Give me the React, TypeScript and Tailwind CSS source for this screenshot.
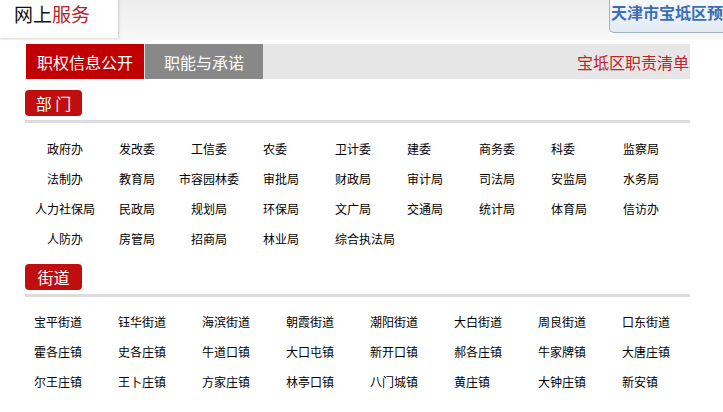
import React from "react";

const FONT = { fontFamily: '"Microsoft YaHei", "Noto Sans CJK SC", "Noto Sans", sans-serif' };

// Trailing full-width space keeps the two-character names aligned like the original list.
const DEPARTMENTS = [
  "政府办", "发改委", "工信委", "农委\u3000", "卫计委", "建委\u3000", "商务委", "科委\u3000", "监察局",
  "法制办", "教育局", "市容园林委", "审批局", "财政局", "审计局", "司法局", "安监局", "水务局",
  "人力社保局", "民政局", "规划局", "环保局", "文广局", "交通局", "统计局", "体育局", "信访办",
  "人防办", "房管局", "招商局", "林业局", "综合执法局",
];

const STREETS = [
  "宝平街道", "钰华街道", "海滨街道", "朝霞街道", "潮阳街道", "大白街道", "周良街道", "口东街道",
  "霍各庄镇", "史各庄镇", "牛道口镇", "大口屯镇", "新开口镇", "郝各庄镇", "牛家牌镇", "大唐庄镇",
  "尔王庄镇", "王卜庄镇", "方家庄镇", "林亭口镇", "八门城镇", "黄庄镇", "大钟庄镇", "新安镇",
];

function SectionTitle({ children }: { children: React.ReactNode }) {
  return (
    <div>
      <div className="flex h-[26px] w-[57px] items-center justify-center rounded-[4px] bg-[#c00d0d] text-[16px] leading-none text-white">
        {children}
      </div>
      <div className="mt-[4px] h-[3px] bg-[#dcdcdc]" />
    </div>
  );
}

export default function App() {
  return (
    <div className="h-[412px] w-[723px] overflow-hidden bg-white" style={FONT}>
      {/* top header strip */}
      <div className="flex h-[40px] bg-gradient-to-b from-[#ececec] to-[#f8f8f8]">
        <div className="h-[38px] w-[119px] shrink-0 border-r border-[#d4d4d4] bg-white pl-[14px] shadow-[0_1px_2px_rgba(0,0,0,0.12)]">
          <div className="h-[28px] text-[19px] leading-[28px]">
            <span className="text-[#111]">网上</span>
            <span className="text-[#b3242a]">服务</span>
          </div>
        </div>
        <div className="flex-1" />
        <div className="h-[33px] w-[114px] shrink-0 whitespace-nowrap rounded-bl-[5px] border-b border-l border-[#9fb0c4] bg-gradient-to-b from-[#f6f9fc] to-[#e3eaf2] pl-[1px] text-[16px] font-bold leading-[24px] text-[#3a6db5]">
          天津市宝坻区预
        </div>
      </div>

      <div className="ml-[25px] mt-[4px] w-[665px]">
        {/* tabs */}
        <div className="ml-px flex h-[35px] bg-[#e6e6e6]">
          <div className="flex w-[118px] items-center justify-center bg-[#c00000] text-[16px] text-white">
            职权信息公开
          </div>
          <div className="ml-px flex w-[118px] items-center justify-center bg-[#888888] text-[16px] text-white">
            职能与承诺
          </div>
          <div className="ml-auto flex items-center pr-px text-[16px] text-[#c3222a]">宝坻区职责清单</div>
        </div>

        {/* departments */}
        <div className="mt-[11px]">
          <SectionTitle>部&nbsp;门</SectionTitle>
          <div className="grid grid-cols-[repeat(9,72px)] pl-[4px] pt-[11px]">
            {DEPARTMENTS.map((d) =>
              d === "综合执法局" ? (
                <div key={d} className="h-[30px] whitespace-nowrap pl-[18px] text-[12px] leading-[30px] text-black">
                  {d}
                </div>
              ) : (
                <div key={d} className="h-[30px] whitespace-pre text-center text-[12px] leading-[30px] text-black">
                  {d}
                </div>
              ),
            )}
          </div>
        </div>

        {/* streets */}
        <div className="mt-[10px]">
          <SectionTitle>街道</SectionTitle>
          <div className="grid grid-cols-[repeat(8,84px)] pl-[9px] pt-[10px]">
            {STREETS.map((s) => (
              <div key={s} className="h-[30px] text-[12px] leading-[30px] text-black">
                {s}
              </div>
            ))}
          </div>
        </div>
      </div>
    </div>
  );
}
